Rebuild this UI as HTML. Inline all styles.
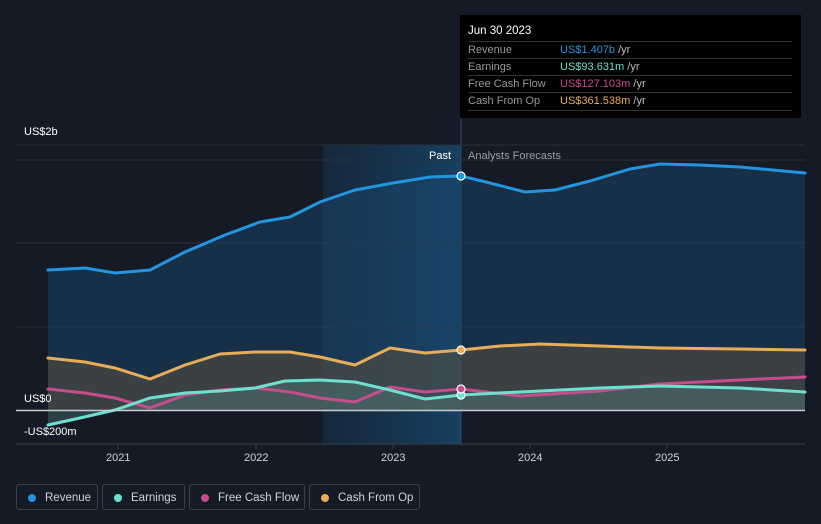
<!DOCTYPE html>
<html><head><style>
body{margin:0;width:821px;height:524px;background:#151b26;font-family:"Liberation Sans",sans-serif;overflow:hidden;position:relative}
.tt{position:absolute;left:460px;top:15px;width:341px;height:103px;background:#000;color:#fff;font-size:11px}
.tt .h{position:absolute;left:8px;top:10px;font-size:11.5px}
.row{position:absolute;left:8px;width:324px;border-top:1px solid #333;height:17px;line-height:17px;color:#999}
.row span{position:absolute;left:92px}
.row i{font-style:normal;color:#bbb}
.lg{position:absolute;top:484px;height:26px;border:1px solid #3a404b;border-radius:3px;color:#cfd3da;font-size:11.5px;line-height:26px;box-sizing:border-box}
.lg b{position:absolute;left:11px;top:9px;width:8px;height:8px;border-radius:50%}
.lg span{position:absolute;left:28px}
.lbl{position:absolute;color:#fff;font-size:11px}
</style></head><body>
<svg width="821" height="524" style="position:absolute;left:0;top:0">
<defs>
<linearGradient id="bg" x1="0" y1="0" x2="1" y2="0"><stop offset="0" stop-color="#172c42"/><stop offset="1" stop-color="#151b26"/></linearGradient>
<linearGradient id="past" x1="0" y1="0" x2="1" y2="0"><stop offset="0" stop-color="#16304a" stop-opacity=".6"/><stop offset="1" stop-color="#164a70" stop-opacity=".8"/></linearGradient>
</defs>
<rect x="323" y="145" width="138" height="299" fill="url(#past)"/>
<g stroke="#2a303b" stroke-width="1"><line x1="16" y1="145" x2="805" y2="145"/><line x1="16" y1="160" x2="805" y2="160"/><line x1="16" y1="243" x2="805" y2="243"/><line x1="16" y1="327" x2="805" y2="327"/></g>
<line x1="461" y1="15" x2="461" y2="444" stroke="#2b4a66"/>
<polygon fill="#1b4a72" fill-opacity=".45" points="48,270 85,268 115,273 150,270 185,252 225,235 260,222 290,217 320,202 355,190 393,183 430,177 461,176 490,183 525,192 555,190 590,181 630,169 660,164 700,165 740,167 805,173 805,410 48,410"/>
<polygon fill="#5a5040" fill-opacity=".55" points="48,358 85,362 115,368 150,379 185,365 220,354 255,352 290,352 320,357 355,365 390,348 425,353 461,350 500,346 540,344 600,346 660,348 740,349 805,350 805,410 48,410"/>
<polygon fill="#5a8a88" fill-opacity=".35" points="48,425 80,418 115,410 150,398 185,393 220,391 255,388 285,381 320,380 355,382 390,390 425,399 461,395 520,392 600,388 660,386 740,388 805,392 805,410 48,410"/>
<g fill="none" stroke-width="3" stroke-linejoin="round" stroke-linecap="round">
<polyline stroke="#2394df" points="48,270 85,268 115,273 150,270 185,252 225,235 260,222 290,217 320,202 355,190 393,183 430,177 461,176 490,183 525,192 555,190 590,181 630,169 660,164 700,165 740,167 805,173"/>
<polyline stroke="#e8ad58" points="48,358 85,362 115,368 150,379 185,365 220,354 255,352 290,352 320,357 355,365 390,348 425,353 461,350 500,346 540,344 600,346 660,348 740,349 805,350"/>
<polyline stroke="#c54d8c" points="48,389 85,393 115,398 150,408 185,395 220,390 255,388 290,392 320,398 355,402 390,387 425,392 461,389 520,396 600,391 660,384 740,380 805,377"/>
<polyline stroke="#6de0cf" points="48,425 80,418 115,410 150,398 185,393 220,391 255,388 285,381 320,380 355,382 390,390 425,399 461,395 520,392 600,388 660,386 740,388 805,392"/>
</g>
<line x1="16" y1="410.5" x2="805" y2="410.5" stroke="#c8ccd2" stroke-width="1.5"/>
<line x1="16" y1="444" x2="805" y2="444" stroke="#3a404b"/>
<g stroke="#3a404b"><line x1="118" y1="444" x2="118" y2="449"/><line x1="256" y1="444" x2="256" y2="449"/><line x1="393" y1="444" x2="393" y2="449"/><line x1="530" y1="444" x2="530" y2="449"/><line x1="667" y1="444" x2="667" y2="449"/></g>
<g stroke="#fff" stroke-width="1.2"><circle cx="461" cy="176" r="4" fill="#2394df"/><circle cx="461" cy="350" r="4" fill="#e8ad58"/><circle cx="461" cy="395" r="4" fill="#6de0cf"/><circle cx="461" cy="389" r="4" fill="#c54d8c"/></g>
</svg>
<div class="lbl" style="left:24px;top:126px">US$2b</div>
<div class="lbl" style="left:24px;top:393px">US$0</div>
<div class="lbl" style="left:24px;top:426px">-US$200m</div>
<div class="lbl" style="left:429px;top:150px">Past</div>
<div class="lbl" style="left:468px;top:150px;color:#9aa0a8">Analysts Forecasts</div>
<div class="lbl" style="left:106px;top:452px;color:#cfd3da">2021</div>
<div class="lbl" style="left:244px;top:452px;color:#cfd3da">2022</div>
<div class="lbl" style="left:381px;top:452px;color:#cfd3da">2023</div>
<div class="lbl" style="left:518px;top:452px;color:#cfd3da">2024</div>
<div class="lbl" style="left:655px;top:452px;color:#cfd3da">2025</div>
<div class="tt"><div class="h">Jun 30 2023</div>
<div class="row" style="top:26px">Revenue<span><font color="#2394df">US$1.407b</font> <i>/yr</i></span></div>
<div class="row" style="top:43px">Earnings<span><font color="#6de0cf">US$93.631m</font> <i>/yr</i></span></div>
<div class="row" style="top:60px">Free Cash Flow<span><font color="#c54d8c">US$127.103m</font> <i>/yr</i></span></div>
<div class="row" style="top:77px;border-bottom:1px solid #333">Cash From Op<span><font color="#e8ad58">US$361.538m</font> <i>/yr</i></span></div>
</div>
<div class="lg" style="left:16px;width:82px"><b style="background:#2394df"></b><span>Revenue</span></div>
<div class="lg" style="left:102px;width:83px"><b style="background:#6de0cf"></b><span>Earnings</span></div>
<div class="lg" style="left:189px;width:116px"><b style="background:#c54d8c"></b><span>Free Cash Flow</span></div>
<div class="lg" style="left:309px;width:111px"><b style="background:#e8ad58"></b><span>Cash From Op</span></div>
</body></html>
